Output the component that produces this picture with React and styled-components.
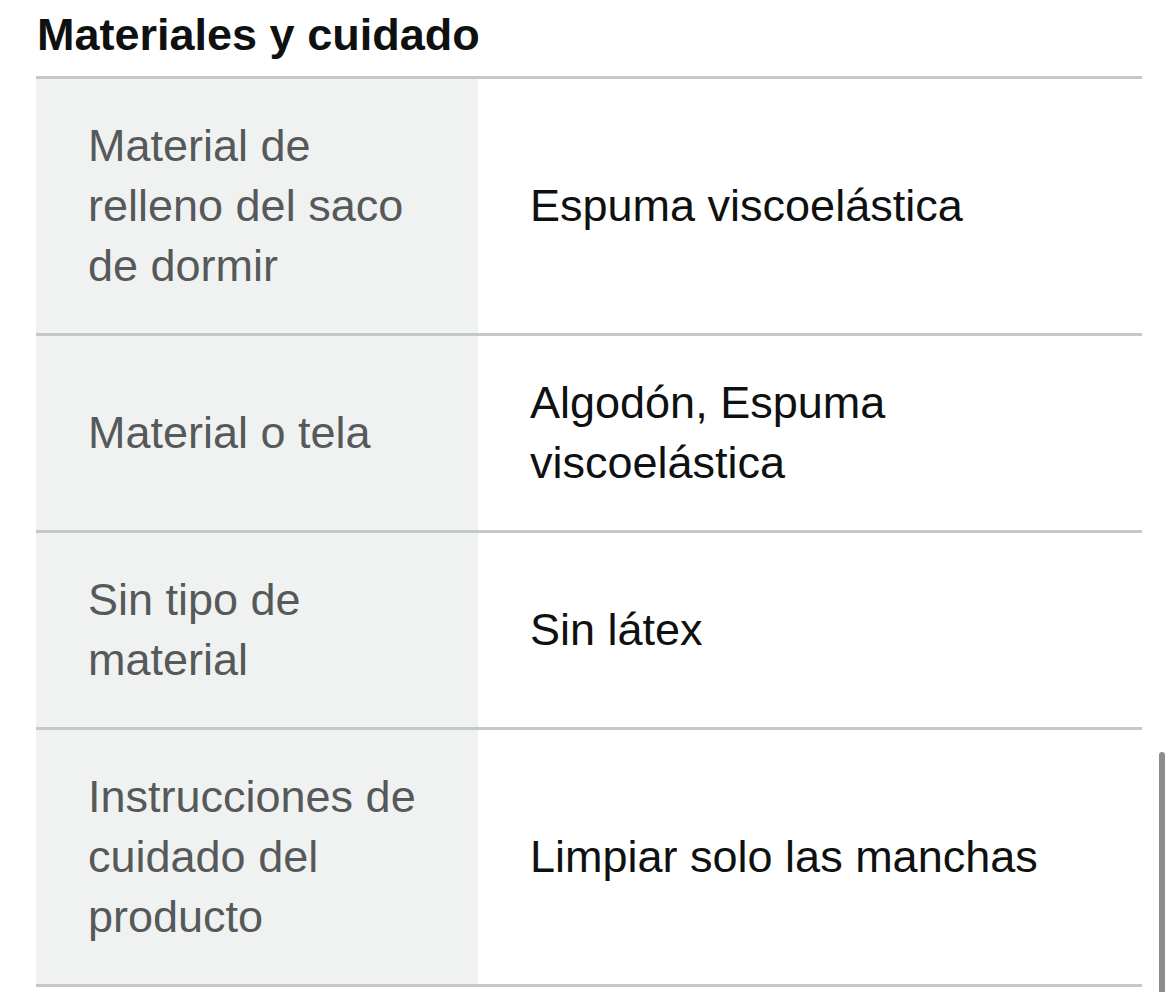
import React from 'react'
import styled, { createGlobalStyle } from 'styled-components'

const GlobalStyle = createGlobalStyle`
  html, body {
    margin: 0;
    padding: 0;
    background: #ffffff;
  }
  body {
    font-family: 'Liberation Sans', Arial, Helvetica, sans-serif;
    color: #0f1111;
  }
`

const Page = styled.div`
  position: relative;
  width: 1166px;
  height: 992px;
  overflow: hidden;
  padding: 0 24px 0 36px;
  box-sizing: border-box;
`

const Title = styled.h2`
  margin: 0;
  padding: 9px 0 0 1px;
  height: 76px;
  box-sizing: border-box;
  font-size: 45px;
  line-height: 52px;
  font-weight: 700;
  color: #0f1111;
`

const Table = styled.div`
  border-top: 3px solid #c4c8c8;
`

const Row = styled.div`
  display: grid;
  grid-template-columns: 442px 1fr;
  border-bottom: 3px solid #c4c8c8;
`

const Cell = styled.div`
  padding: 37px 52px;
  font-size: 45px;
  line-height: 60px;
  display: flex;
  align-items: center;
  background: ${(p) => (p.$label ? '#f0f2f2' : '#ffffff')};
  color: ${(p) => (p.$label ? '#565959' : '#0f1111')};
`

const Scrollbar = styled.div`
  position: absolute;
  right: 1px;
  top: 752px;
  width: 6px;
  height: 250px;
  border-radius: 3px 3px 0 0;
  background: #8c8c8c;
`

const rows = [
  ['Material de relleno del saco de dormir', 'Espuma viscoelástica'],
  ['Material o tela', 'Algodón, Espuma viscoelástica'],
  ['Sin tipo de material', 'Sin látex'],
  ['Instrucciones de cuidado del producto', 'Limpiar solo las manchas'],
]

const App = () => {
  return (
    <Page>
      <GlobalStyle />
      <Title>Materiales y cuidado</Title>
      <Table>
        {rows.map(([label, value]) => (
          <Row key={label}>
            <Cell $label>{label}</Cell>
            <Cell>{value}</Cell>
          </Row>
        ))}
      </Table>
      <Scrollbar />
    </Page>
  )
}

export default App
